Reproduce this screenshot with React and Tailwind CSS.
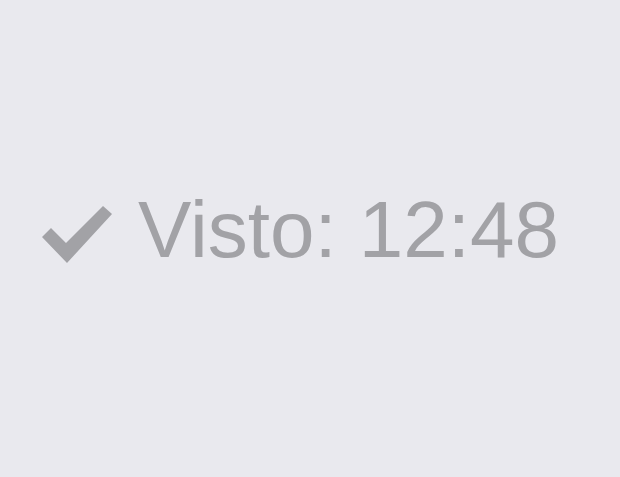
export default function App() {
  return (
    <div className="h-screen w-full bg-[#e9e9ee] flex items-center pl-[41px] pb-[18px]">
      <div className="flex items-center gap-[25px]">
        <svg width="72" height="60" viewBox="0 0 72 60" className="mt-[10px]">
          <polygon points="1,32 10,23 25,38 62,1 71,9 26,58" fill="#a2a2a6" />
        </svg>
        <span className="text-[80px] leading-none text-[#a2a2a6]" style={{ fontFamily: '"Liberation Sans", Arial, sans-serif' }}>
          Visto: 12:48
        </span>
      </div>
    </div>
  );
}
